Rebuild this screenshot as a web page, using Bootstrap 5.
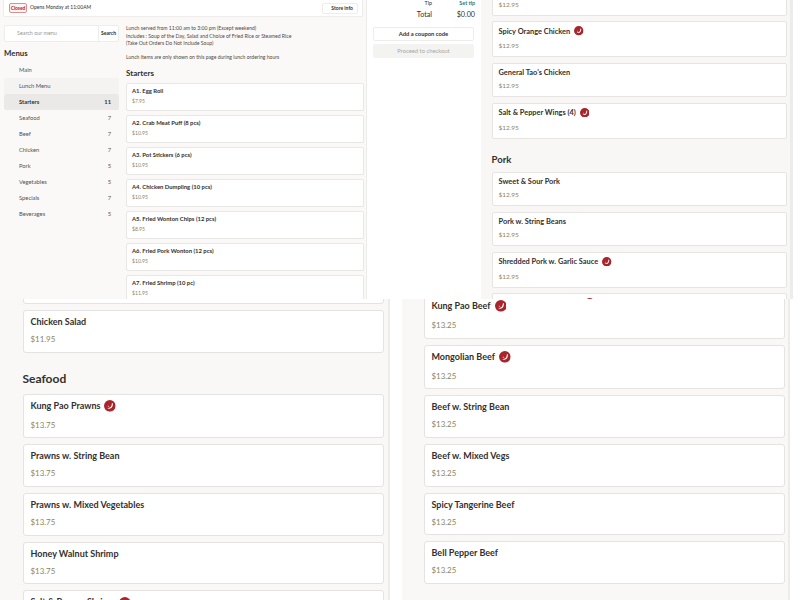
<!DOCTYPE html>
<html lang="en">
<head>
  <meta charset="UTF-8" />
  <meta name="viewport" content="width=device-width, initial-scale=1.0" />
  <title>Online ordering</title>
  <link href="https://cdn.jsdelivr.net/npm/bootstrap@5.3.0/dist/css/bootstrap.min.css" rel="stylesheet">
  <style>
    html, body { height: 600px; overflow: hidden; }
    body { font-family: Lato, "Liberation Sans", sans-serif; color: #33302e; background: #fff; }
    .shot-top { height: 299px; overflow: hidden; }
    .shot-bottom { height: 301px; overflow: hidden; }
    .pane-menu { width: 367px; background: #faf9f7; border-right: 1px solid #ececea; padding: 0 3px; overflow: hidden; flex: none; }
    .pane-cart { width: 114px; background: #fff; padding: 0 6px; flex: none; }
    .pane-more { flex: 1; background: #f8f7f5; padding: 0 3px 0 10.5px; border-right: 3px solid #ececea; margin-right: 7px; overflow: hidden; }
    .store-bar { height: 17px; background: #fff; border: 1px solid #eeedeb; border-top: 0; border-radius: 0 0 2px 2px; padding: 0 4px 0 5px; font-size: 5px; }
    .closed-tag { border: 1px solid #d98f93; background: #fdf5f5; color: #a8252c; font-weight: 700; border-radius: 2px; width: 18px; height: 10px; text-align: center; font-size: 4.8px; line-height: 8px; margin-right: 3px; }
    .mini-btn { border: 1px solid #eeedeb; background: #fff; font-size: 5px; font-weight: 700; width: 36px; height: 11px; line-height: 9px; padding: 0 4px 0 0; text-align: right; border-radius: 2px; color: #33302e; }
    .side-col { width: 115px; margin-left: 1px; flex: none; }
    .search-box { height: 17px; margin-top: 8px; background: #fff; border: 1px solid #eeedeb; border-radius: 2px; font-size: 5.4px; line-height: 15px; }
    .search-box span:first-child { flex: 1; padding-left: 12px; color: #9a9895; }
    .search-box span:last-child { border-left: 1px solid #eeedeb; width: 20px; font-size: 5.1px; font-weight: 700; text-align: center; }
    .side-title { font-size: 7.8px; font-weight: 700; margin: 5px 0 3px 0; line-height: 12px; }
    .side-link { height: 16.05px; line-height: 16px; font-size: 5.8px; padding: 0 8px 0 15px; color: #55524f; border-radius: 2px; }
    .side-link.soft { background: #f4f3f1; }
    .side-link.on { background: #ebe9e7; font-weight: 700; color: #33302e; }
    .main-col { width: 238px; margin-left: 7px; flex: none; }
    .lunch-note { font-size: 5.1px; line-height: 7.2px; margin: 8.4px 0 0 0; color: #4b4846; }
    .cat-small { font-size: 8px; font-weight: 700; line-height: 12px; margin: 5.5px 0 4px 0; }
    .dish-xs { height: 28px; margin-bottom: 4px; padding: 3px 5px; border: 1px solid #e9e8e6; border-radius: 2px; background: #fff; }
    .dish-xs b { display: block; font-size: 5.9px; line-height: 8px; }
    .dish-xs i { display: block; font-style: normal; font-size: 5.1px; color: #8d8462; margin-top: 3.5px; line-height: 7px; }
    .tip-row { font-size: 5.4px; line-height: 7px; }
    .tip-row .set-tip { color: #1d7d86; font-weight: 700; }
    .total-row { font-size: 7.2px; line-height: 12px; margin-top: 2px; }
    .num-cell { width: 43px; text-align: right; }
    .coupon-btn, .checkout-btn { display: block; width: 101px; height: 14px; font-size: 5.8px; line-height: 12px; padding: 0; text-align: center; border-radius: 2px; }
    .coupon-btn { margin-top: 6px; background: #fff; border: 1px solid #eeedeb; font-weight: 700; color: #33302e; }
    .checkout-btn, .checkout-btn:disabled { margin-top: 3px; background: #f3f3f1; border: 1px solid #f3f3f1; color: #aaa8a5; opacity: 1; }
    .dish-md { padding: 4.5px 6px; margin-bottom: 5.5px; height: 34.5px; border: 1px solid #e6e5e3; border-radius: 2px; background: #fff; }
    .dish-md.hot { height: 36px; }
    .dish-md b { display: flex; align-items: center; gap: 4px; font-size: 7.4px; line-height: 9px; height: 9px; }
    .dish-md i { display: block; font-style: normal; font-size: 6.5px; color: #8d8462; margin-top: 4px; line-height: 9px; }
    .dish-md.hot i { margin-top: 5.5px; }
    .cat-md { font-size: 9.6px; font-weight: 700; line-height: 14px; margin: 14px 0 5px 0; }
    .first-cut { margin-top: -19px; }
    .pane-half { background: #f9f8f6; overflow: hidden; flex: none; }
    .pane-left { width: 390px; padding: 0 4.5px 0 22.5px; border-right: 2px solid #ececea; }
    .pane-right { width: 388px; margin-left: 12px; padding: 0 3.5px 0 21.5px; border-right: 2px solid #ececea; }
    .dish-lg { padding: 5px 7px; height: 42.5px; margin-bottom: 6.2px; border: 1px solid #e4e3e1; border-radius: 3px; background: #fff; }
    .dish-lg.hot { height: 44.5px; }
    .dish-lg b { display: flex; align-items: center; gap: 4px; font-size: 9px; line-height: 12px; height: 12px; }
    .dish-lg i { display: block; font-style: normal; font-size: 7.9px; color: #8d8462; margin-top: 5px; line-height: 12px; }
    .dish-lg.hot i { margin-top: 7px; }
    .cat-lg { font-size: 12px; font-weight: 700; line-height: 18px; margin: 17px 0 6px 0; }
    .cut-left { margin-top: -37.5px; }
    .cut-right { margin-top: -5px; }
    .chili-sm { width: 9.500px; height: 9.500px; flex: none; }
    .chili-lg { width: 11.700px; height: 11.700px; flex: none; }
    .chili-push { margin-left: 86px; }
  </style>
</head>
<body>
  <svg width="0" height="0" class="position-absolute">
    <symbol id="chili" viewBox="0 0 24 24">
      <circle cx="12" cy="12" r="12" fill="#a8252c"/>
      <path d="M18 6c1 5-1 9-4 11-2 1.300-5 1.300-8 0 3 .3 6-1 8-3 1.500-2 2-5 2-7z" fill="#fff"/>
      <path d="M7 12.500c1-1 3-1 4 0l-1 2c-1 .5-2 0-3-2z" fill="#e8888c"/>
    </symbol>
  </svg>

  <div class="d-flex shot-top">
    <div class="pane-menu">
      <div class="store-bar d-flex align-items-center">
        <span class="closed-tag">Closed</span>
        <span>Opens Monday at 11:00AM</span>
        <button type="button" class="btn mini-btn ms-auto">Store info</button>
      </div>
      <div class="d-flex">
        <div class="side-col">
          <div class="search-box d-flex"><span>Search our menu</span><span>Search</span></div>
          <div class="side-title">Menus</div>
          <div class="side-link d-flex justify-content-between"><span>Main</span></div>
          <div class="side-link soft d-flex justify-content-between"><span>Lunch Menu</span></div>
          <div class="side-link on d-flex justify-content-between"><span>Starters</span><span>11</span></div>
          <div class="side-link d-flex justify-content-between"><span>Seafood</span><span>7</span></div>
          <div class="side-link d-flex justify-content-between"><span>Beef</span><span>7</span></div>
          <div class="side-link d-flex justify-content-between"><span>Chicken</span><span>7</span></div>
          <div class="side-link d-flex justify-content-between"><span>Pork</span><span>5</span></div>
          <div class="side-link d-flex justify-content-between"><span>Vegetables</span><span>5</span></div>
          <div class="side-link d-flex justify-content-between"><span>Specials</span><span>7</span></div>
          <div class="side-link d-flex justify-content-between"><span>Beverages</span><span>5</span></div>
        </div>
        <div class="main-col">
          <p class="lunch-note">Lunch served from 11:00 am to 3:00 pm (Except weekend)<br>Includes : Soup of the Day, Salad and Choice of Fried Rice or Steamed Rice<br>(Take Out Orders Do Not Include Soup)<br><br>Lunch items are only shown on this page during lunch ordering hours</p>
          <div class="cat-small">Starters</div>
          <div class="dish-xs"><b>A1. Egg Roll</b><i>$7.95</i></div>
          <div class="dish-xs"><b>A2. Crab Meat Puff (8 pcs)</b><i>$10.95</i></div>
          <div class="dish-xs"><b>A3. Pot Stickers (6 pcs)</b><i>$10.95</i></div>
          <div class="dish-xs"><b>A4. Chicken Dumpling (10 pcs)</b><i>$10.95</i></div>
          <div class="dish-xs"><b>A5. Fried Wonton Chips (12 pcs)</b><i>$8.95</i></div>
          <div class="dish-xs"><b>A6. Fried Pork Wonton (12 pcs)</b><i>$10.95</i></div>
          <div class="dish-xs"><b>A7. Fried Shrimp (10 pc)</b><i>$11.95</i></div>
        </div>
      </div>
    </div>
    <div class="pane-cart">
      <div class="tip-row d-flex justify-content-end"><span>Tip</span><span class="num-cell set-tip">Set tip</span></div>
      <div class="total-row d-flex justify-content-end"><span>Total</span><span class="num-cell">$0.00</span></div>
      <button type="button" class="btn coupon-btn">Add a coupon code</button>
      <button type="button" class="btn checkout-btn" disabled>Proceed to checkout</button>
    </div>
    <div class="pane-more">
      <div class="dish-md first-cut"><b></b><i>$12.95</i></div>
      <div class="dish-md hot"><b>Spicy Orange Chicken <svg class="chili-sm"><use href="#chili"/></svg></b><i>$12.95</i></div>
      <div class="dish-md"><b>General Tao's Chicken</b><i>$12.95</i></div>
      <div class="dish-md hot"><b>Salt &amp; Pepper Wings (4) <svg class="chili-sm"><use href="#chili"/></svg></b><i>$12.95</i></div>
      <div class="cat-md">Pork</div>
      <div class="dish-md"><b>Sweet &amp; Sour Pork</b><i>$12.95</i></div>
      <div class="dish-md"><b>Pork w. String Beans</b><i>$12.95</i></div>
      <div class="dish-md hot"><b>Shredded Pork w. Garlic Sauce <svg class="chili-sm"><use href="#chili"/></svg></b><i>$12.95</i></div>
      <div class="dish-md hot"><b><svg class="chili-sm chili-push"><use href="#chili"/></svg></b></div>
    </div>
  </div>

  <div class="d-flex shot-bottom">
    <div class="pane-half pane-left">
      <div class="dish-lg cut-left"></div>
      <div class="dish-lg"><b>Chicken Salad</b><i>$11.95</i></div>
      <div class="cat-lg">Seafood</div>
      <div class="dish-lg hot"><b>Kung Pao Prawns <svg class="chili-lg"><use href="#chili"/></svg></b><i>$13.75</i></div>
      <div class="dish-lg"><b>Prawns w. String Bean</b><i>$13.75</i></div>
      <div class="dish-lg"><b>Prawns w. Mixed Vegetables</b><i>$13.75</i></div>
      <div class="dish-lg"><b>Honey Walnut Shrimp</b><i>$13.75</i></div>
      <div class="dish-lg hot"><b>Salt &amp; Pepper Shrimp <svg class="chili-lg"><use href="#chili"/></svg></b><i>$13.75</i></div>
    </div>
    <div class="pane-half pane-right">
      <div class="dish-lg hot cut-right"><b>Kung Pao Beef <svg class="chili-lg"><use href="#chili"/></svg></b><i>$13.25</i></div>
      <div class="dish-lg hot"><b>Mongolian Beef <svg class="chili-lg"><use href="#chili"/></svg></b><i>$13.25</i></div>
      <div class="dish-lg"><b>Beef w. String Bean</b><i>$13.25</i></div>
      <div class="dish-lg"><b>Beef w. Mixed Vegs</b><i>$13.25</i></div>
      <div class="dish-lg"><b>Spicy Tangerine Beef</b><i>$13.25</i></div>
      <div class="dish-lg"><b>Bell Pepper Beef</b><i>$13.25</i></div>
    </div>
  </div>

  <script src="https://cdn.jsdelivr.net/npm/bootstrap@5.3.0/dist/js/bootstrap.bundle.min.js"></script>
</body>
</html>
